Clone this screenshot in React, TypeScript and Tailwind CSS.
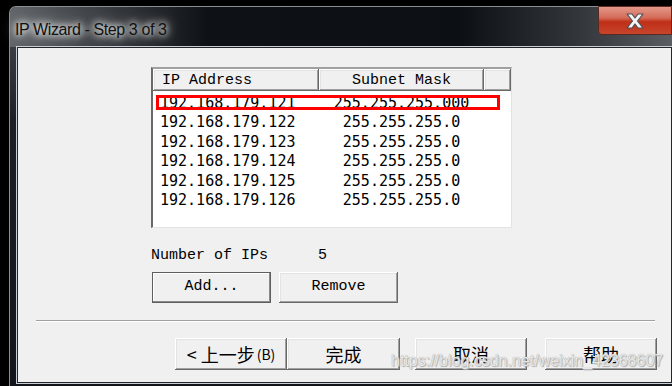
import React from 'react';

const rows = [
  { ip: '192.168.179.121', mask: '255.255.255.000' },
  { ip: '192.168.179.122', mask: '255.255.255.0' },
  { ip: '192.168.179.123', mask: '255.255.255.0' },
  { ip: '192.168.179.124', mask: '255.255.255.0' },
  { ip: '192.168.179.125', mask: '255.255.255.0' },
  { ip: '192.168.179.126', mask: '255.255.255.0' },
];

const raised =
  'bg-[#f0f0f0] shadow-[inset_-1px_-1px_0_#696969,inset_1px_1px_0_#ffffff,inset_-2px_-2px_0_#a0a0a0,inset_2px_2px_0_#e3e3e3]';

const mono = "font-['Liberation_Mono','DejaVu_Sans_Mono',monospace]";
const sansMono = "font-['DejaVu_Sans_Mono',monospace]";
const cjk = "font-['Noto_Sans_CJK_SC','Noto_Sans',sans-serif]";

const App: React.FC = () => {
  return (
    <div className="w-[672px] h-[386px] bg-black overflow-hidden pt-[6px] pl-[9px]">
      <div className="h-full flex flex-col rounded-tl-[7px] border-t border-l border-[#8a8e92] bg-[linear-gradient(180deg,#4a4e52_0%,#1c2024_30%,#12161a_100%)]">
        {/* Title bar */}
        <div className="h-[40px] flex items-start justify-between bg-[linear-gradient(90deg,#62666a_0%,#3a3e42_14%,#0e1115_30%,#0c0f13_68%,#33373b_86%,#5a5e62_100%)] rounded-tl-[6px]">
          <span className="mt-[11px] ml-[5px] text-[16px] tracking-[-0.4px] text-[#111] font-['Liberation_Sans',Arial,sans-serif] [text-shadow:0_0_6px_#fff,0_0_10px_#fff,0_0_16px_#ccc]">
            IP Wizard - Step 3 of 3
          </span>
          <div className="w-[74px] h-[29px] -mt-px rounded-bl-[4px] border border-[#5a2a22] bg-[linear-gradient(180deg,#e3998a_0%,#d56b58_40%,#bf2f17_55%,#c7452c_100%)] flex items-center justify-center">
            <svg width="22" height="16" viewBox="0 0 22 16">
              <path
                d="M3 1 L8 1 L11 5 L14 1 L19 1 L13.5 8 L19 15 L14 15 L11 11 L8 15 L3 15 L8.5 8 Z"
                fill="#f4f4f4"
                stroke="#4a4f58"
                strokeWidth="1.2"
                strokeLinejoin="round"
              />
            </svg>
          </div>
        </div>

        {/* Client area */}
        <div className="flex-1 relative ml-[7px] mb-[3px] border border-[#22262b] bg-[#f0f0f0] shadow-[0_0_0_1px_#c9ced4]">
          <div className="flex flex-col">
            {/* List box */}
            <div className="relative ml-[133px] mt-[19px] w-[361px] h-[161px] bg-white border-t-2 border-l-2 border-t-[#a0a0a0] border-l-[#696969] border-r border-b border-r-[#e3e3e3] border-b-[#e3e3e3]">
              <div className={`flex h-[22px] text-[15px] text-black ${mono}`}>
                <div className={`w-[166px] pl-[9px] pt-[2px] flex items-center ${raised}`}>IP Address</div>
                <div className={`w-[165px] pt-[2px] flex items-center justify-center ${raised}`}>Subnet Mask</div>
                <div className={`flex-1 ${raised}`} />
              </div>
              <div className={`pt-[2px] text-[15px] text-black ${sansMono}`}>
                {rows.map((r) => (
                  <div key={r.ip} className="flex h-[19.5px] items-center">
                    <div className="w-[166px] pl-[7px]">{r.ip}</div>
                    <div className="w-[165px] text-center">{r.mask}</div>
                  </div>
                ))}
              </div>
              <div className="absolute left-[3px] top-[26px] w-[344px] h-[15px] border-[3px] border-[#ff0000]" />
            </div>

            {/* Number of IPs */}
            <div className={`ml-[133px] mt-[19px] h-[18px] flex items-center text-[15px] text-black ${mono}`}>
              <span className="w-[167px]">Number of IPs</span>
              <span>5</span>
            </div>

            {/* Add / Remove */}
            <div className={`ml-[134px] mt-[7px] flex gap-[8px] text-[15px] text-black ${mono}`}>
              <div className="w-[119px] h-[31px] border border-[#5e5e5e] bg-[#f0f0f0] shadow-[inset_-1px_-1px_0_#8a8a8a,inset_1px_1px_0_#ffffff] flex items-center justify-center">
                Add...
              </div>
              <div className={`w-[119px] h-[31px] flex items-center justify-center ${raised}`}>Remove</div>
            </div>

            {/* Separator */}
            <div className="ml-[18px] mt-[17px] w-[619px] h-[2px] border-t border-[#a0a0a0] border-b border-b-white" />

            {/* Bottom buttons */}
            <div className={`ml-[157px] mt-[16px] flex text-[18px] text-black ${cjk}`}>
              <div className={`w-[112px] h-[32px] flex items-center justify-center ${raised}`}>
                <span>&lt; 上一步</span>
                <span className="text-[14px] ml-[2px]">(B)</span>
              </div>
              <div className={`w-[113px] h-[32px] flex items-center justify-center ${raised}`}>完成</div>
              <div className={`ml-[15px] w-[112px] h-[32px] flex items-center justify-center ${raised}`}>取消</div>
              <div className={`ml-[18px] w-[112px] h-[32px] flex items-center justify-center ${raised}`}>帮助</div>
            </div>
          </div>

          {/* Watermark */}
          <div className="absolute left-[373px] top-[301px] text-[16px] text-[#e8e8e8] font-['Liberation_Sans',Arial,sans-serif] [text-shadow:0_0_1px_#9a9a9a,1px_1px_1px_#b0b0b0] pointer-events-none whitespace-nowrap">
            https://blog.csdn.net/weixin_42368607
          </div>
        </div>
      </div>
    </div>
  );
};

export default App;
